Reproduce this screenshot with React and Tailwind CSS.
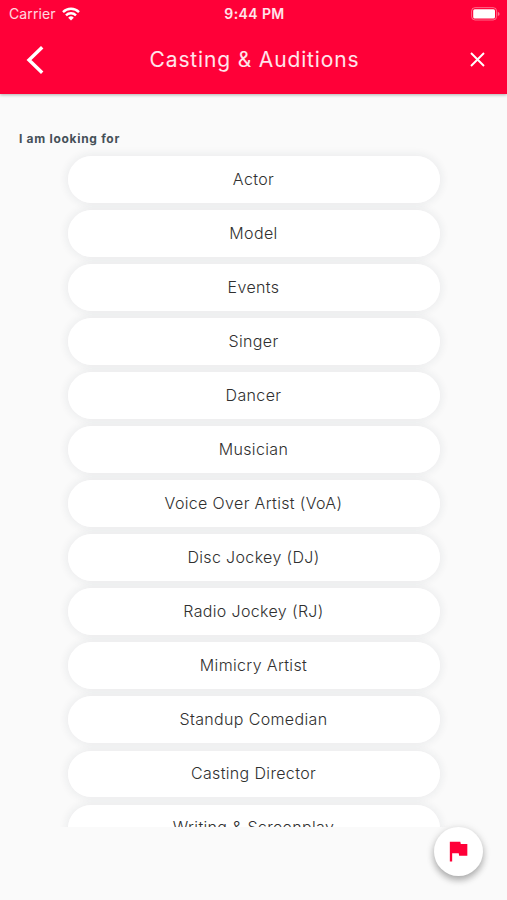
const roles = [
  'Actor', 'Model', 'Events', 'Singer', 'Dancer', 'Musician',
  'Voice Over Artist (VoA)', 'Disc Jockey (DJ)', 'Radio Jockey (RJ)',
  'Mimicry Artist', 'Standup Comedian', 'Casting Director', 'Writing & Screenplay',
];

function StatusBar() {
  return (
    <div className="grid h-[27px] grid-cols-3 items-center pl-[9px] pr-[7px]">
      <div className="flex items-center gap-[6px] text-[14px] leading-4 tracking-[0.1px] text-white/85">
        <span>Carrier</span>
        <svg width="18" height="14" viewBox="0 0 18 14" fill="none" stroke="white" strokeWidth="2.4">
          <path d="M1 5.1a11.4 11.4 0 0 1 16 0" />
          <path d="M4 8.3a7.1 7.1 0 0 1 10 0" />
          <path d="M9 13.6 6.2 10.7a4 4 0 0 1 5.6 0z" fill="white" stroke="none" />
        </svg>
      </div>
      <div className="text-center text-[14px] font-semibold leading-4 tracking-[0.4px] text-white/90">9:44 PM</div>
      <svg className="justify-self-end" width="29" height="14" viewBox="0 0 29 14">
        <rect x="0.6" y="0.6" width="25" height="12.4" rx="3.5" fill="none" stroke="white" strokeOpacity="0.4" />
        <rect x="2.2" y="2.2" width="21.8" height="9.2" rx="1.5" fill="white" />
        <path d="M26.8 4.7v4.4q1.8-.7 1.8-2.2t-1.8-2.2" fill="white" fillOpacity="0.45" />
      </svg>
    </div>
  );
}

export default function App() {
  return (
    <div className="relative flex h-[900px] w-[507px] flex-col overflow-hidden bg-[#fafafa] font-['Inter',sans-serif]">
      <header className="z-10 h-[94px] shrink-0 bg-[#ff0038] text-white shadow-[0_1px_3px_rgba(0,0,0,0.3)]">
        <StatusBar />
        <div className="flex h-[65px] items-center justify-between pl-[26px] pr-[22px]">
          <button className="w-[18px] pt-px" aria-label="Back">
            <svg width="18" height="28" viewBox="0 0 18 28" fill="none" stroke="white" strokeWidth="3.4">
              <path d="M16.2 1.2 3 14l13.2 12.8" />
            </svg>
          </button>
          <h1 className="mr-[5px] text-[21px] leading-7 tracking-[0.85px] text-white/90">Casting &amp; Auditions</h1>
          <button className="w-[15px]" aria-label="Close">
            <svg width="15" height="15" viewBox="0 0 15 15" stroke="white" strokeWidth="1.9">
              <path d="m1 1 13 13M14 1 1 14" />
            </svg>
          </button>
        </div>
      </header>
      <main className="flex h-[733px] shrink-0 flex-col overflow-hidden pt-[37px]">
        <h2 className="ml-[19px] text-[12px] font-bold leading-4 tracking-[0.7px] text-[#455058]">I am looking for</h2>
        <div className="isolate mx-auto mt-[9px] flex w-[372px] flex-col gap-[7.5px]">
          {roles.map((role) => (
            <button
              key={role}
              className="relative flex h-[46.55px] w-full shrink-0 items-center justify-center rounded-full bg-white pb-[1.5px] text-[16px] font-light leading-6 tracking-[0.35px] text-[#303030] before:absolute before:inset-0 before:-z-10 before:rounded-full before:shadow-[0_0_8px_2px_rgba(30,50,60,0.065)]"
            >
              {role}
            </button>
          ))}
        </div>
      </main>
      <button
        aria-label="Report"
        className="absolute left-[433.5px] top-[827px] flex size-[49px] items-center justify-center rounded-full bg-white pb-px shadow-[0_4px_7px_rgba(0,0,0,0.28),0_1px_10px_rgba(0,0,0,0.1)]"
      >
        <svg width="28" height="28" viewBox="0 0 24 24" fill="#ff0038">
          <path d="M14.4 6 14 4H5v17h2v-7h5.6l.4 2h7V6z" />
        </svg>
      </button>
    </div>
  );
}
